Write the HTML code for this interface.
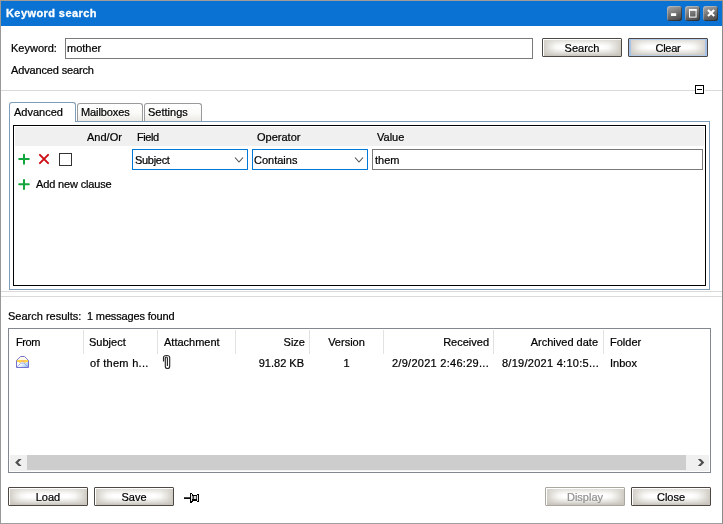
<!DOCTYPE html>
<html>
<head>
<meta charset="utf-8">
<title>Keyword search</title>
<style>
html,body{margin:0;padding:0;}
body{width:723px;height:524px;overflow:hidden;background:#fff;font-family:"Liberation Sans",sans-serif;font-size:11px;color:#000;}
#win{position:absolute;left:0;top:0;width:721px;height:522px;border:1px solid;border-color:#a29c96 #8a8a8a #9e9e9e #9a9896;background:#fff;}
.abs{position:absolute;}
.t{will-change:transform;-webkit-text-stroke:.22px currentColor;position:absolute;line-height:13px;height:13px;white-space:nowrap;font-size:11px;}
.r{text-align:right;}
.c{text-align:center;}
#title{position:absolute;left:1px;top:1px;width:721px;height:25px;background:#0a72d2;}
#title .t{color:#fff;font-weight:bold;-webkit-text-stroke:.3px #fff;}
.wb{position:absolute;top:5px;width:15px;height:15px;border-radius:3px;background:linear-gradient(160deg,#a6a6a6 0%,#8a8a8a 30%,#626262 65%,#444 100%);box-shadow:inset 1px 1px 0 rgba(210,220,235,.35),inset -1px -1px 0 rgba(20,25,35,.5);}
.inp{position:absolute;border:1px solid #7a7a7a;background:#fff;box-sizing:border-box;}
.cmb{position:absolute;border:1px solid #0078d7;background:#fff;box-sizing:border-box;}
.btn{position:absolute;box-sizing:border-box;width:80px;height:19px;border:1px solid #4d4942;border-radius:1px;
 background:
  linear-gradient(to bottom,rgba(214,211,204,.9) 0,rgba(214,211,204,.35) 22%,rgba(214,211,204,0) 40%,rgba(203,199,191,0) 55%,rgba(203,199,191,.5) 80%,rgba(198,194,186,1) 100%),
  linear-gradient(to right,#cdcac2 0,#e6e4df 8%,#f8f8f6 16%,#ffffff 24%,#ffffff 76%,#f8f8f6 84%,#e6e4df 92%,#cdcac2 100%);
 box-shadow:inset 1px 1px 0 #fff;}
.btn .t{left:0;width:78px;text-align:center;top:3px;}
.btn.dis{border-color:#aaa79f;}
.btn.dis .t{color:#909090;}
.btn.foc{box-shadow:inset 2px 0 0 #a6c2ea,inset -2px 0 0 #a6c2ea,inset 0 1px 0 #b4ccef,inset 0 -1px 0 #b8cce8;}
.hl{position:absolute;height:1px;background:#dadada;}
.vs{position:absolute;width:1px;background:#e2e2e2;top:330px;height:24px;}
.tab{position:absolute;box-sizing:border-box;border:1px solid #989a9c;border-bottom:none;border-radius:3px 3px 0 0;background:linear-gradient(#ffffff,#fbfbf9 50%,#ecebe6);}
</style>
</head>
<body>
<div id="win"></div>

<!-- title bar -->
<div id="title">
  <div class="t" style="left:5px;top:6px;letter-spacing:.42px;">Keyword search</div>
  <div class="wb" style="left:666px;">
    <svg class="abs" style="left:0;top:0" width="15" height="15"><rect x="4" y="7.2" width="5.2" height="2.8" fill="#fff"/></svg>
  </div>
  <div class="wb" style="left:684px;">
    <svg class="abs" style="left:0;top:0" width="15" height="15"><rect x="4.5" y="3.5" width="6.6" height="7.6" fill="none" stroke="#fff" stroke-width="1"/><rect x="4" y="3" width="7.6" height="1.8" fill="#fff"/></svg>
  </div>
  <div class="wb" style="left:702px;">
    <svg class="abs" style="left:0;top:0" width="15" height="15"><path d="M5 3.9 L11.2 10.1 M11.2 3.9 L5 10.1" stroke="#fff" stroke-width="2.1" fill="none"/></svg>
  </div>
</div>

<!-- keyword row -->
<div class="t" style="left:11px;top:42px;">Keyword:</div>
<div class="inp" style="left:65px;top:38px;width:468px;height:21px;"></div>
<div class="t" style="left:67px;top:42px;">mother</div>
<div class="btn" style="left:542px;top:38px;"><div class="t">Search</div></div>
<div class="btn foc" style="left:628px;top:38px;"><div class="t" style="letter-spacing:-.25px;">Clear</div></div>
<div class="t" style="left:11px;top:64px;letter-spacing:-.15px;">Advanced search</div>

<!-- separator + collapse box -->
<div class="hl" style="left:1px;top:90px;width:721px;"></div>
<div class="abs" style="left:695px;top:88px;width:10px;height:5px;background:#fff;"></div>
<div class="abs" style="left:695px;top:85px;width:7px;height:7px;border:1px solid #000;background:#fff;"></div>
<div class="abs" style="left:697px;top:89px;width:5px;height:1px;background:#000;"></div>

<!-- tab control -->
<div class="abs" style="left:9px;top:121px;width:699px;height:167px;border:1px solid #7f9db9;background:#fff;"></div>
<div class="tab" style="left:77px;top:103px;width:66px;height:18px;"></div>
<div class="tab" style="left:144px;top:103px;width:58px;height:18px;"></div>
<div class="abs" style="left:9px;top:102px;width:65px;height:19px;border:1px solid #7f9db9;border-bottom:none;border-radius:3px 3px 0 0;background:#fff;"></div>
<div class="t" style="left:14px;top:106px;">Advanced</div>
<div class="t" style="left:81px;top:106px;letter-spacing:-.1px;">Mailboxes</div>
<div class="t" style="left:148px;top:106px;">Settings</div>

<!-- clause panel -->
<div class="abs" style="left:13px;top:125px;width:691px;height:159px;border:1px solid #000;background:#fff;"></div>
<div class="abs" style="left:15px;top:127px;width:689px;height:19px;background:#f0f0f0;"></div>
<div class="t" style="left:87px;top:131px;">And/Or</div>
<div class="t" style="left:137px;top:131px;letter-spacing:-.45px;">Field</div>
<div class="t" style="left:257px;top:131px;">Operator</div>
<div class="t" style="left:377px;top:131px;">Value</div>

<svg class="abs" style="left:16px;top:152px;" width="36" height="16">
  <path d="M3.2 7 H12.8 M8 2.8 V11.7" stroke="#12a63c" stroke-width="2" stroke-linecap="round" fill="none"/>
  <path d="M23.9 2.9 L32.1 11.1 M32.1 2.9 L23.9 11.1" stroke="#cc0f14" stroke-width="2" stroke-linecap="round" fill="none"/>
</svg>
<div class="abs" style="left:59px;top:153px;width:11px;height:11px;border:1px solid #333;background:#fff;"></div>

<div class="cmb" style="left:132px;top:149px;width:116px;height:21px;"></div>
<div class="t" style="left:135px;top:154px;letter-spacing:-.3px;">Subject</div>
<svg class="abs" style="left:233px;top:155px;" width="13" height="10"><path d="M2 2.5 L6 7 L10 2.5" stroke="#505050" stroke-width="1.1" fill="none"/></svg>
<div class="cmb" style="left:252px;top:149px;width:116px;height:21px;"></div>
<div class="t" style="left:254px;top:154px;">Contains</div>
<svg class="abs" style="left:353px;top:155px;" width="13" height="10"><path d="M2 2.5 L6 7 L10 2.5" stroke="#505050" stroke-width="1.1" fill="none"/></svg>
<div class="inp" style="left:372px;top:149px;width:331px;height:21px;"></div>
<div class="t" style="left:375px;top:154px;">them</div>

<svg class="abs" style="left:16px;top:177px;" width="16" height="16">
  <path d="M3.2 7.2 H12.8 M8 3 V11.9" stroke="#12a63c" stroke-width="2" stroke-linecap="round" fill="none"/>
</svg>
<div class="t" style="left:36px;top:178px;letter-spacing:-.15px;">Add new clause</div>

<!-- splitter lines -->
<div class="hl" style="left:1px;top:291px;width:721px;"></div>
<div class="hl" style="left:1px;top:296px;width:721px;"></div>

<!-- results -->
<div class="t" style="left:8px;top:310px;">Search results:</div>
<div class="t" style="left:87px;top:310px;letter-spacing:-.15px;">1 messages found</div>

<div class="abs" style="left:8px;top:328px;width:701px;height:143px;border:1px solid #828790;background:#fff;"></div>
<div class="vs" style="left:83px;"></div>
<div class="vs" style="left:157px;"></div>
<div class="vs" style="left:235px;"></div>
<div class="vs" style="left:309px;"></div>
<div class="vs" style="left:383px;"></div>
<div class="vs" style="left:493px;"></div>
<div class="vs" style="left:603px;"></div>
<div class="t" style="left:15.5px;top:336px;letter-spacing:-.4px;">From</div>
<div class="t" style="left:89px;top:336px;">Subject</div>
<div class="t" style="left:164px;top:336px;">Attachment</div>
<div class="t r" style="left:240px;width:65px;top:336px;">Size</div>
<div class="t c" style="left:310px;width:73px;top:336px;">Version</div>
<div class="t r" style="left:390px;width:99px;top:336px;">Received</div>
<div class="t r" style="left:498px;width:100px;top:336px;">Archived date</div>
<div class="t" style="left:610px;top:336px;">Folder</div>

<!-- row -->
<svg class="abs" style="left:15px;top:355px;" width="16" height="14">
  <defs>
    <linearGradient id="eb" x1="0" y1="0" x2="1" y2="1"><stop offset="0" stop-color="#eaf4ff"/><stop offset=".5" stop-color="#ffffff"/><stop offset="1" stop-color="#7fb2f0"/></linearGradient>
  </defs>
  <path d="M1.5 5.5 L5.5 1.5 H9.5 L13.5 5.5 V12.5 H1.5 Z" fill="url(#eb)" stroke="#7472cc" stroke-width="1"/>
  <path d="M2 5.5 L5.7 2 H9.3 L13 5.5 Z" fill="#fffbe8"/>
  <path d="M2 5 H13 V7 L11 7 L10 8.5 L9 7 H6 L5 8.5 L4 7 H2 Z" fill="#ffd24a"/>
  <path d="M6.5 5.3 H9.5 V6.6 H6.5 Z" fill="#ffb070"/>
  <path d="M2 12 L6 8 H9 L13 12" fill="none" stroke="#8f9fe0" stroke-width=".8"/>
</svg>
<div class="t" style="left:90px;top:357px;letter-spacing:.3px;">of them h...</div>
<svg class="abs" style="left:160px;top:352px;" width="14" height="20"><path d="M3.5 9.5 V5.5 Q3.5 3.5 6.6 3.5 Q9.7 3.5 9.7 5.5 V14.2 Q9.7 16.5 7.5 16.5 Q5.3 16.5 5.3 14.2 V6 Q5.3 5 6.4 5 Q7.4 5 7.4 6 V14" fill="none" stroke="#2a2a2a" stroke-width="1.15"/></svg>
<div class="t r" style="left:240px;width:64px;top:357px;">91.82 KB</div>
<div class="t c" style="left:310px;width:73px;top:357px;">1</div>
<div class="t r" style="left:380px;width:109px;top:357px;letter-spacing:.28px;">2/9/2021 2:46:29...</div>
<div class="t r" style="left:490px;width:109px;top:357px;letter-spacing:.28px;">8/19/2021 4:10:5...</div>
<div class="t" style="left:610px;top:357px;">Inbox</div>

<!-- h scrollbar -->
<div class="abs" style="left:10px;top:455px;width:699px;height:16px;background:#f0f0f0;"></div>
<div class="abs" style="left:27px;top:455px;width:659px;height:15px;background:#cdcdcd;"></div>
<svg class="abs" style="left:10px;top:455px;" width="17" height="16"><path d="M5.1 7.5 L8.6 4 H11.6 L8.1 7.5 L11.6 11 H8.6 Z" fill="#505050"/></svg>
<svg class="abs" style="left:692px;top:455px;" width="17" height="16"><path d="M12.3 7.5 L8.8 4 H5.8 L9.3 7.5 L5.8 11 H8.8 Z" fill="#505050"/></svg>

<!-- bottom buttons -->
<div class="btn" style="left:8px;top:487px;"><div class="t">Load</div></div>
<div class="btn" style="left:94px;top:487px;"><div class="t">Save</div></div>
<svg class="abs" style="left:183px;top:492px;" width="18" height="12" shape-rendering="crispEdges">
  <rect x="1" y="5" width="6" height="1" fill="#4a4a4a"/><rect x="1" y="6" width="6" height="1" fill="#0a0a0a"/>
  <rect x="7" y="1" width="1" height="10" fill="#000"/>
  <rect x="8" y="1" width="1" height="1" fill="#000"/>
  <rect x="8" y="2" width="1" height="7" fill="#ececec"/>
  <rect x="9" y="2" width="1" height="2" fill="#000"/>
  <rect x="9" y="4" width="1" height="3" fill="#8a8a8a"/>
  <rect x="8" y="9" width="2" height="1" fill="#000"/>
  <rect x="8" y="10" width="1" height="1" fill="#000"/>
  <rect x="10" y="3" width="4" height="1" fill="#000"/>
  <rect x="10" y="4" width="1" height="3" fill="#3c3c3c"/>
  <rect x="11" y="4" width="2" height="3" fill="#dcdcdc"/>
  <rect x="13" y="4" width="1" height="3" fill="#4a4a4a"/>
  <rect x="9" y="7" width="5" height="2" fill="#000"/>
  <rect x="14" y="2" width="1" height="1" fill="#000"/>
  <rect x="14" y="3" width="1" height="6" fill="#e2e2e2"/>
  <rect x="14" y="9" width="1" height="1" fill="#000"/>
  <rect x="15" y="2" width="1" height="8" fill="#000"/>
</svg>
<div class="btn dis" style="left:545px;top:487px;"><div class="t">Display</div></div>
<div class="btn" style="left:631px;top:487px;"><div class="t">Close</div></div>

</body>
</html>
